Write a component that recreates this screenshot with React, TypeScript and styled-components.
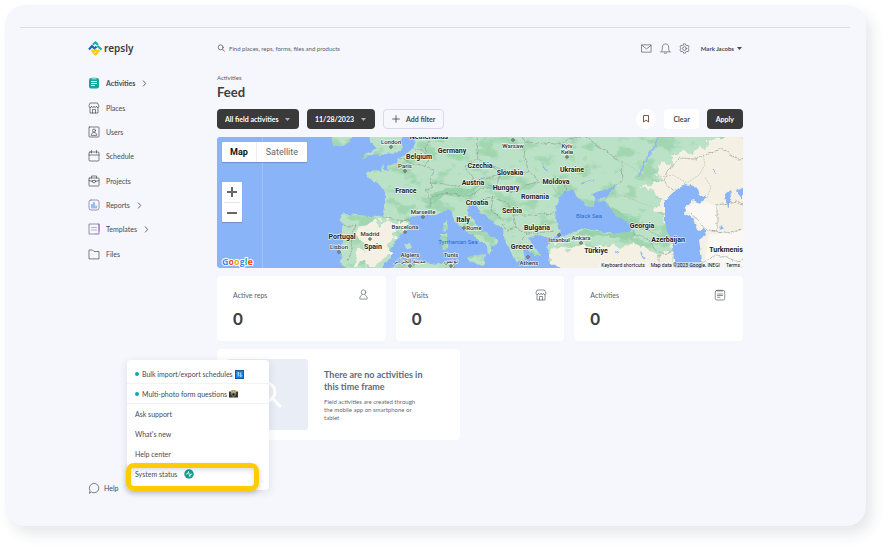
import React from "react";
import styled, { createGlobalStyle, css } from "styled-components";

const GlobalStyle = createGlobalStyle`
  *, *::before, *::after { box-sizing: border-box; }
  body { margin: 0; background: #fff; font-family: Lato, "Open Sans", sans-serif; color: #454a52; }
  button, input, select { font: inherit; color: inherit; margin: 0; padding: 0; border: 0; background: none; }
  button { cursor: pointer; }
  a { color: inherit; text-decoration: none; }
  h1, h2, p, ul { margin: 0; padding: 0; }
  ul { list-style: none; }
`;

const Page = styled.div`
  min-height: 100vh;
  padding: 5px 25px 25px 5px;
  display: flex;
`;

const Shell = styled.div`
  flex: 1;
  display: flex;
  flex-direction: column;
  padding: 22px 16px 28px 15px;
  border-radius: 20px;
  background: #f5f7fc;
  box-shadow: 6px 8px 14px rgba(40, 44, 66, 0.11);
`;

const Body = styled.div`
  flex: 1;
  display: grid;
  grid-template-columns: 129px 1fr;
  margin: 0 107px 0 68px;
`;

const Rule = styled.hr`
  width: 100%;
  height: 1px;
  margin: 0;
  border: 0;
  background: #dcdee4;
`;

const Sidebar = styled.aside`
  display: flex;
  flex-direction: column;
  padding-top: 13px;
`;

const Logo = styled.a`
  display: flex;
  align-items: center;
  gap: 1px;
  height: 15px;
  color: #3c3c3c;
  font: 600 10px/15px "Noto Sans", sans-serif;
`;

const NavList = styled.ul`
  display: grid;
  height: 195px;
  margin-top: 15px;
`;

const NavItem = styled.li`
  display: flex;
  align-items: center;
`;

const NavLink = styled.a<{ $active?: boolean }>`
  display: flex;
  align-items: center;
  gap: 6px;
  font-size: 7px;
  font-weight: ${(p) => (p.$active ? 700 : 400)};
  color: #454a52;
`;

const HelpArea = styled.div`
  position: relative;
  margin-top: auto;
`;

const HelpButton = styled.button`
  display: flex;
  align-items: center;
  gap: 4px;
  height: 20px;
  font-size: 7px;
`;

const HelpMenu = styled.ul`
  position: absolute;
  z-index: 2;
  left: 39px;
  bottom: 8px;
  width: 142px;
  height: 130px;
  padding-top: 4px;
  border-radius: 4px;
  background: #fff;
  box-shadow: 0 2px 8px rgba(40, 50, 80, 0.12);
`;

const HelpItem = styled.li<{ $divided?: boolean }>`
  height: 20px;
  border-bottom: 1px solid ${(p) => (p.$divided ? "#f2f3f6" : "transparent")};
`;

const HelpLink = styled.a`
  display: flex;
  align-items: center;
  gap: 2px;
  height: 20px;
  padding: 0 8px;
  font-size: 7px;
  white-space: nowrap;
`;

const Dot = styled.span`
  width: 4px;
  height: 4px;
  margin-right: 1px;
  border-radius: 50%;
  background: #12a89d;
`;

const Highlight = styled.li`
  position: absolute;
  left: -1px;
  right: 10px;
  bottom: -1px;
  height: 28px;
  border: 5px solid #ffcb05;
  border-radius: 8px;
  box-shadow: 0 2px 5px rgba(30, 40, 60, 0.25), inset 0 2px 5px rgba(30, 40, 60, 0.16);
  pointer-events: none;
`;

const Main = styled.main`
  min-width: 0;
  display: flex;
  flex-direction: column;
`;

const TopBar = styled.header`
  display: flex;
  align-items: center;
  gap: 8px;
  height: 40px;
`;

const Search = styled.label`
  flex: 1;
  display: flex;
  align-items: center;
  gap: 4px;
  color: #59606b;
  font-size: 6px;
`;

const SearchInput = styled.input`
  flex: 1;
  min-width: 0;
  height: 16px;
  outline: 0;
  &::placeholder { color: #59606b; opacity: 1; }
`;

const IconButton = styled.button`
  display: flex;
  color: #4a515b;
`;

const UserButton = styled.button`
  display: flex;
  align-items: center;
  gap: 3px;
  margin: 0 1px 0 3px;
  font-size: 6px;
  font-weight: 700;
`;

const Crumb = styled.p`
  margin-top: 6px;
  font-size: 6px;
  line-height: 8px;
  color: #59606b;
`;

const Title = styled.h1`
  margin-top: 2px;
  font-size: 13px;
  line-height: 16px;
  font-weight: 700;
  color: #3c3e42;
`;

const FilterBar = styled.div`
  display: flex;
  align-items: center;
  gap: 8px;
  height: 20px;
  margin-top: 9px;
`;

const Spacer = styled.span`
  flex: 1;
`;

const boxed = css`
  height: 20px;
  border-radius: 4px;
  font-size: 7px;
  font-weight: 700;
`;

const SelectBox = styled.label`
  display: grid;
  align-items: center;
  color: #fff;
  & > * { grid-area: 1 / 1; }
  & > svg { justify-self: end; margin-right: 9px; pointer-events: none; }
`;

const Select = styled.select`
  ${boxed}
  appearance: none;
  padding: 0 20px 0 8px;
  background: #3a3a3a;
`;

const Button = styled.button<{ $kind: "dark" | "light" | "outline" }>`
  ${boxed}
  display: flex;
  align-items: center;
  gap: 6px;
  padding: 0 9px;
  ${(p) => p.$kind === "dark" && css`background: #3a3a3a; color: #fff;`}
  ${(p) => p.$kind === "light" && css`background: #fff;`}
  ${(p) => p.$kind === "outline" && css`padding: 0 8px; border: 1px solid #d8dbee;`}
`;

const RoundButton = styled.button`
  display: flex;
  align-items: center;
  justify-content: center;
  width: 20px;
  height: 20px;
  border-radius: 50%;
  background: #fff;
`;

const MapPanel = styled.section`
  display: grid;
  height: 131px;
  margin-top: 8px;
  border-radius: 4px;
  overflow: hidden;
  position: relative;
  background: #8ab4f8;
`;

const MapArt = styled.svg`
  width: 100%;
  height: 131px;
`;

const MapTypes = styled.div`
  position: absolute;
  left: 5px;
  top: 5px;
  display: flex;
  background: #fff;
  border-radius: 1px;
  box-shadow: 0 1px 1px rgba(0, 0, 0, 0.2);
`;

const MapType = styled.button<{ $on?: boolean }>`
  height: 20px;
  padding: 0 8px;
  font: ${(p) => (p.$on ? 700 : 400)} 9px Roboto, sans-serif;
  color: ${(p) => (p.$on ? "#111" : "#666")};
  & + & { padding: 0 9px; border-left: 1px solid #eee; }
`;

const ZoomBox = styled.div`
  position: absolute;
  left: 5px;
  top: 45px;
  width: 20px;
  background: #fff;
  border-radius: 1px;
  box-shadow: 0 1px 1px rgba(0, 0, 0, 0.2);
`;

const ZoomButton = styled.button`
  display: flex;
  align-items: center;
  justify-content: center;
  width: 16px;
  height: 20px;
  margin: 0 2px;
  & + & { border-top: 1px solid #e6e6e6; }
`;

const GoogleMark = styled.span`
  position: absolute;
  left: 5px;
  bottom: 1px;
  font: 700 9px/11px "Open Sans", sans-serif;
  -webkit-text-stroke: 2px #fff;
  paint-order: stroke fill;
`;

const Tint = styled.span<{ $c: string }>`
  color: ${(p) => p.$c};
`;

const Credits = styled.div`
  position: absolute;
  right: 0;
  bottom: 0;
  display: flex;
  gap: 6px;
  padding: 0 3px;
  background: rgba(245, 245, 245, 0.6);
  font: 5px/6px Roboto, sans-serif;
  color: #111;
`;

const Stats = styled.div`
  display: grid;
  grid-template-columns: repeat(3, 1fr);
  gap: 10px;
  margin-top: 8px;
`;

const StatCard = styled.section`
  height: 65px;
  padding: 13px 17px 0 16px;
  border-radius: 4px;
  background: #fff;
`;

const StatHead = styled.div`
  display: flex;
  align-items: center;
  justify-content: space-between;
  height: 11px;
  font-size: 7px;
  color: #59606b;
`;

const StatValue = styled.p`
  margin-top: 9px;
  font-size: 17px;
  line-height: 20px;
  font-weight: 700;
  color: #3c3e42;
`;

const EmptyCard = styled.section`
  display: flex;
  gap: 16px;
  width: 243px;
  height: 91px;
  margin-top: 8px;
  padding: 10px;
  border-radius: 4px;
  background: #fff;
`;

const EmptyArt = styled.div`
  flex: 0 0 81px;
  display: flex;
  align-items: center;
  justify-content: center;
  border-radius: 3px;
  background: #e9edf5;
`;

const EmptyText = styled.div`
  width: 108px;
  padding-top: 10px;
  color: #5f6a78;
`;

const EmptyTitle = styled.h2`
  font-size: 9px;
  line-height: 12px;
  font-weight: 700;
  white-space: nowrap;
`;

const EmptyCopy = styled.p`
  margin-top: 5px;
  font-size: 6px;
  line-height: 8px;
  white-space: nowrap;
`;

type IconProps = { size?: number; children: React.ReactNode };
const Icon = ({ size = 12, children }: IconProps) => (
  <svg width={size} height={size} viewBox="0 0 24 24" fill="none" stroke="currentColor" strokeWidth="1.400" strokeLinecap="round" strokeLinejoin="round" aria-hidden="true">
    {children}
  </svg>
);

const Store = () => (
  <Icon>
    <path d="M5 2h14l3 6c0 2-1.200 3-2.500 3S17 10 17 8.500C17 10 16 11 14.500 11S12 10 12 8.500C12 10 11 11 9.500 11S7 10 7 8.500C7 10 6 11 4.500 11S2 10 2 8z" />
    <path d="M4 11v11h16V11M9 22v-7h6v7" />
  </Icon>
);
const Person = () => (
  <Icon size={11}><circle cx="12" cy="7" r="5" /><path d="M9 12 4 18v4h16v-4l-5-6" /></Icon>
);
const Note = () => (
  <Icon><rect x="2.500" y="3" width="19" height="19" rx="3" /><path d="M8 2v3M12 2v3M16 2v3M7 10h10M7 13h10M7 16.500h5" /></Icon>
);
const Chevron = () => <Icon size={7}><path d="m8 3 8 9-8 9" strokeWidth="2.800" /></Icon>;
const Caret = ({ color = "currentColor" }: { color?: string }) => (
  <svg width="5" height="3" viewBox="0 0 10 6" aria-hidden="true"><path d="M0 0h10L5 6z" fill={color} /></svg>
);

const navItems = [
  { label: "Activities", active: true, more: true, icon: (
    <Icon><g stroke="none"><rect x="2" y="2" width="20" height="21" rx="4" fill="#12a89d" /><path d="M7 1h10v4H7z" fill="#7fd3cc" /></g><path d="M7 9h10M7 13h10M7 17h6" stroke="#fff" strokeWidth="2" /></Icon>) },
  { label: "Places", icon: <Store /> },
  { label: "Users", icon: <Icon><rect x="2" y="2" width="20" height="20" rx="1" /><circle cx="12" cy="9" r="3" /><path d="M6.500 18c0-3 2-5 5.500-5s5.500 2 5.500 5z" /></Icon> },
  { label: "Schedule", icon: <Icon><rect x="2" y="4" width="20" height="18" rx="2" /><path d="M2 10h20M7 1v5M17 1v5" /></Icon> },
  { label: "Projects", icon: <Icon><rect x="2" y="6" width="20" height="16" rx="1" /><path d="M7 6V2h10v4M2 11l7 2M22 11l-7 2M9 11h6v3l-3 2-3-2z" /></Icon> },
  { label: "Reports", more: true, icon: <Icon><rect x="2" y="2" width="20" height="20" rx="4" stroke="#7a6b9c" /><path d="M8 11v7M12 7v11M16 14v4" stroke="#3984d8" strokeWidth="2" /></Icon> },
  { label: "Templates", more: true, icon: <Icon><path d="M22 16V2H2v20h14" stroke="#6f6488" /><path d="M22 2v20h-6" stroke="#8c3bb5" /><path d="M7 9h10M7 14h10" stroke="#9b93aa" /></Icon> },
  { label: "Files", icon: <Icon><path d="M2 21V4h7l3 3h10v14z" /></Icon> },
];

const stats = [
  { label: "Active reps", value: 0, icon: <Person /> },
  { label: "Visits", value: 0, icon: <Store /> },
  { label: "Activities", value: 0, icon: <Note /> },
];

type Label = [string, number, number];
const countries: Label[] = [
  ["Netherlands", 212, 2], ["Belgium", 202, 22], ["Germany", 235, 16], ["Czechia", 263, 31],
  ["Slovakia", 293, 38], ["Austria", 256, 48], ["Hungary", 289, 53], ["France", 189, 56],
  ["Romania", 318, 62], ["Croatia", 260, 68], ["Serbia", 295, 76], ["Italy", 246, 85],
  ["Bulgaria", 320, 93], ["Greece", 305, 112], ["Portugal", 125, 102], ["Spain", 156, 112],
  ["Ukraine", 355, 35], ["Moldova", 339, 47], ["Georgia", 425, 91], ["Azerbaijan", 451, 105],
  ["Türkiye", 379, 116], ["Turkmenis", 509, 115],
];
const cities: Label[] = [
  ["London", 174, 7], ["Paris", 188, 31], ["Warsaw", 296, 11], ["Kyiv", 350, 11], ["Київ", 350, 17],
  ["Marseille", 206, 77], ["Barcelona", 188, 92], ["Madrid", 153, 99], ["Lisbon", 122, 112],
  ["Rome", 257, 93], ["Algiers", 193, 120], ["مدينة الجزائر", 193, 126], ["Tunis", 234, 120],
  ["تونس", 234, 126], ["Athens", 312, 128], ["İstanbul", 342, 105], ["Ankara", 364, 103],
];
const pins = [[174, 10], [188, 34], [296, 3], [350, 20], [206, 80], [188, 95], [153, 102], [122, 115], [247, 91], [193, 129], [234, 129], [311, 120], [342, 98], [364, 106]];

const landShapes = [
  "M114-5 116 3 118 10 125 9 133 5 139-5z",
  "M152-5 153 5 160 11 153 15 144 22 151 20 158 17 165 19 173 16 183 15 186 9 183 5 190-5z",
  "M203-5 196 11 188 18 182 21 180 26 171 28 172 34 168 33 165 26 164 34 158 33 148 36 150 41 160 45 168 55 168 70 166 79 160 80 140 78 127 77 122 83 126 88 126 100 123 113 126 117 124 126 132 135 165 135 168 125 174 121 173 110 186 96 194 90 192 83 196 79 218 78 225 75 231 72 235 76 237 83 246 93 254 96 263 103 270 110 271 118 276 114 273 108 281 107 278 101 264 94 258 85 250 75 251 65 258 65 264 76 276 85 286 91 288 106 295 115 299 125 308 121 306 113 317 108 311 101 320 98 333 101 341 98 343 94 338 83 341 65 346 54 356 53 362 61 370 69 378 68 377 63 388 64 397 74 413 86 415 93 405 97 390 96 366 91 353 97 345 99 336 104 330 109 333 126 343 127 352 135 535 135 535-5z",
  "M170 135 176 129 196 126 215 127 230 125 240 126 237 130 242 135z",
  "M250 120 269 118 266 129 252 124z",
  "M223 96 230 96 231 110 225 113z",
  "M226 87 230 84 231 93 227 95z",
  "M187 108 193 106 196 111 191 112z",
  "M312 106 324 118 318 120 309 110z",
];
const dry = [
  "M535-5H510L494 8 478 15 464 11 450 24 444 26 442 40 436 44 424 50 431 54 443 60 440 72 447 80 452 92 460 131H535z",
  "M141 90 156 86 170 92 175 87 193 84 182 96 173 108 168 124 146 130 136 129 140 116 148 108 142 100z",
  "M332 110 346 112 362 108 394 110 420 107 440 118 455 112 460 135H350L336 124z",
  "M163 80 175 82 187 90 172 99 163 91z",
];
const seas = [
  "M458 53 468 48 480 51 482 58 490 61 483 66 476 63 468 70 466 76 476 81 480 93 487 92 490 97 482 103 485 123 483 135H458L456 110 450 95 447 80 447 65z",
  "M374 57 400 49 393 55 390 61 378 63z",
  "M508 57 513 53 515 60 510 71zM519 54 526 50V63zM502 91 505 88 507 92z",
];
const borders = [
  "M126 88 138 90 134 98 135 113 131 124",
  "M166 79 175 82 186 84 193 82",
  "M183 21 194 26 207 29 217 33 212 46 216 50 208 54 214 62 212 70 217 78",
  "M196 11 210 16 212 26 207 30M214 0 209 10 211 17",
  "M212 46 228 47 240 50 250 45 258 43 248 29 262 22 276 30 284 38 272 41 258 44",
  "M262 22 259 0M276 30 300 36 312 35 307 21 308 5 302-5",
  "M284 38 278 50 264 52 252 60 235 57 225 56 215 61",
  "M272 48 282 53 300 55 312 47 322 45 315 37 312 35",
  "M322 45 333 46 344 58M333 43 341 40 350 52 346 56",
  "M264 62 276 60 290 66 296 78 312 78 338 76M264 62 255 67M276 60 273 71 286 84",
  "M296 78 299 90 310 97 337 94M299 90 290 94 286 88M310 97 304 103 298 112",
  "M308 5 340 7 366-2 385 12 404 24 405 43 396 50",
  "M413 86 431 93 440 99 452 104M415 96 432 103 438 113 447 117 458 113",
  "M535 21 520 22 505 12 488 17 476 22 464 21 450 34 447 44 456 54",
  "M474 76 490 94H500V68L520 64 535 72M492 93 514 96 524 92M485 126 500 118 520 124 535 118",
  "M442 118 442 131M196 126 199 135M238 130 233 135",
];
const labelFont = 'Roboto, "DejaVu Sans", sans-serif';

const EuropeMap = () => (
  <MapArt viewBox="0 0 526 131" preserveAspectRatio="xMidYMid slice" role="img" aria-label="Map of Europe">
    <defs>
      <filter id="coast" filterUnits="userSpaceOnUse" x="-10" y="-10" width="546" height="151">
        <feTurbulence type="fractalNoise" baseFrequency="0.14" numOctaves="3" seed="7" />
        <feDisplacementMap in="SourceGraphic" scale="5" xChannelSelector="R" yChannelSelector="G" />
      </filter>
      <filter id="woods" filterUnits="userSpaceOnUse" x="-10" y="-10" width="546" height="151" colorInterpolationFilters="sRGB">
        <feTurbulence type="fractalNoise" baseFrequency="0.05 0.08" numOctaves="4" seed="12" />
        <feColorMatrix values="0 0 0 0 .63  0 0 0 0 .84  0 0 0 0 .69  7 0 0 0 -3.700" />
        <feComposite in2="SourceGraphic" operator="in" />
      </filter>
      <filter id="steppe" filterUnits="userSpaceOnUse" x="-10" y="-10" width="546" height="151">
        <feTurbulence type="fractalNoise" baseFrequency="0.1" numOctaves="3" seed="3" result="n" />
        <feDisplacementMap in="SourceGraphic" in2="n" scale="18" xChannelSelector="R" yChannelSelector="G" />
      </filter>
    </defs>
    <rect width="526" height="131" fill="#8ab4f8" />
    <path d="M45.500 0v131" stroke="#9fc2fa" />
    <g fill="#bbe2c6" filter="url(#coast)">{landShapes.map((d) => <path key={d} d={d} />)}</g>
    <g filter="url(#woods)"><g filter="url(#coast)">{landShapes.map((d) => <path key={d} d={d} />)}</g></g>
    <path d="M214 57 228 51 250 52 262 48 258 56 240 60 228 58 216 67zM390 67 410 80 440 92 425 90 400 80zM366 92 390 97 418 94 416 103 390 99 360 98z" fill="#98d2aa" filter="url(#coast)" />
    <g fill="#f5f0e4" filter="url(#steppe)">{dry.map((d) => <path key={d} d={d} />)}</g>
    <path d="M468 72 478 66 490 65 500 70V94L483 92 478 80zM492 98 535 92V135H486z" fill="#fbf8f3" />
    <g fill="#8ab4f8" filter="url(#coast)">{seas.map((d) => <path key={d} d={d} />)}</g>
    <path d="M441 0 436 12 427 25 422 40M365 47 372 44 377 44M324 26 330 35M398 116 402 114M425 115 428 122M495 32 499 38" fill="none" stroke="#8ab4f8" strokeWidth="1.200" filter="url(#coast)" />
    <g fill="none" stroke="#8b9b93" strokeWidth=".7" strokeDasharray="3 .7" filter="url(#coast)">{borders.map((d) => <path key={d} d={d} />)}</g>
    <g fill="none" stroke="#b5b8ae" strokeWidth=".6" strokeDasharray="2 1">
      <path d="M443 40 456 38 470 46 482 38 488 28 486 17M490 61 494 50 488 40M395 56 410 60 424 66 436 70M404 24 418 32 430 42" />
    </g>
    <g fill="#fff" stroke="#333" strokeWidth=".9">{pins.map(([x, y]) => <circle key={`${x}-${y}`} cx={x} cy={y} r="1.200" />)}</g>
    <g textAnchor="middle" fontFamily={labelFont} stroke="#fff" strokeWidth="1.400" strokeOpacity=".75" strokeLinejoin="round" paintOrder="stroke">
      <g fontSize="7" fontWeight="700" fill="#222">{countries.map(([t, x, y]) => <text key={t} x={x} y={y}>{t}</text>)}</g>
      <g fontSize="6" fontWeight="500" fill="#333">{cities.map(([t, x, y]) => <text key={t} x={x} y={y}>{t}</text>)}</g>
    </g>
    <g textAnchor="middle" fontFamily={labelFont} fontSize="6" fill="#2d6bd2">
      <text x="241" y="107">Tyrrhenian Sea</text>
      <text x="372" y="81">Black Sea</text>
    </g>
  </MapArt>
);

const RepslyMark = () => (
  <svg width="15" height="15" viewBox="0 0 30 30" fill="none" strokeWidth="4.200" aria-hidden="true">
    <path d="m2 17 6-7 5 5 4-4" stroke="#1a62b5" />
    <path d="m10 7 5-4 5 5" stroke="#12b0a5" />
    <path d="m19 10 8 7" stroke="#12b0a5" />
    <path d="m7 18 4 4 4-4 4 4 4-4M10 22l5 5 5-5" stroke="#ffcb05" />
  </svg>
);

const gearPath = "M10 2h4l1 3 2 1 3-1 2 4-2 2v2l2 2-2 4-3-1-2 1-1 3h-4l-1-3-2-1-3 1-2-4 2-2v-2L2 9l2-4 3 1 2-1z";

export default function App() {
  return (
    <>
      <GlobalStyle />
      <Page>
        <Shell>
          <Rule />
          <Body>
            <Sidebar>
              <Logo href="#home"><RepslyMark />repsly</Logo>
              <nav aria-label="Main">
                <NavList>
                  {navItems.map((item) => (
                    <NavItem key={item.label}>
                      <NavLink href={`#${item.label.toLowerCase()}`} $active={item.active}>
                        {item.icon}{item.label}{item.more && <Chevron />}
                      </NavLink>
                    </NavItem>
                  ))}
                </NavList>
              </nav>
              <HelpArea>
                <HelpButton type="button" aria-expanded="true">
                  <Icon><path d="M3 22l1-5a9.500 9.500 0 1 1 3.500 3.500z" /></Icon>Help
                </HelpButton>
                <HelpMenu>
                  <HelpItem $divided>
                    <HelpLink href="#bulk"><Dot />Bulk import/export schedules
                      <svg width="9" height="9" viewBox="0 0 18 18" aria-hidden="true"><path d="M0 0h18v18H0z" fill="#0b5cad" /><path d="M2 2h14v14H2z" fill="#1583e0" /><path d="M6.500 13V5M4.500 7l2-2 2 2M11.500 5v8M9.500 11l2 2 2-2" fill="none" stroke="#fff" strokeWidth="1.500" /></svg>
                    </HelpLink>
                  </HelpItem>
                  <HelpItem $divided>
                    <HelpLink href="#photo"><Dot />Multi-photo form questions
                      <svg width="9" height="8" viewBox="0 0 18 16" aria-hidden="true"><path d="M0 3h4l1-2h8l1 2h4v12H0z" fill="#333" /><path d="m9 0 2 3 4-2-2 4 3 2H2l3-2-2-4 4 2z" fill="#e8c933" /><circle cx="9" cy="9" r="4" fill="#555" stroke="#999" /><circle cx="9" cy="9" r="1.500" fill="#111" /></svg>
                    </HelpLink>
                  </HelpItem>
                  {["Ask support", "What's new", "Help center"].map((t) => (
                    <HelpItem key={t}><HelpLink href="#help">{t}</HelpLink></HelpItem>
                  ))}
                  <HelpItem>
                    <HelpLink href="#status">System status
                      <svg width="15" height="10" viewBox="-10 0 30 20" aria-hidden="true"><circle cx="10" cy="10" r="9.500" fill="#12a191" /><path d="M4 10h3l2-5 2.500 10 2-5H16" fill="none" stroke="#fff" strokeWidth="1.600" /></svg>
                    </HelpLink>
                  </HelpItem>
                  <Highlight aria-hidden="true" />
                </HelpMenu>
              </HelpArea>
            </Sidebar>

            <Main>
              <TopBar>
                <Search>
                  <Icon size={8}><circle cx="11" cy="10" r="7.500" strokeWidth="2.400" /><path d="m17 16 5 6" strokeWidth="2.400" /></Icon>
                  <SearchInput type="search" aria-label="Search" placeholder="Find places, reps, forms, files and products" />
                </Search>
                <IconButton type="button" aria-label="Messages"><Icon size={11}><rect x="2" y="4" width="20" height="16" /><path d="m2 5 10 8 10-8" /></Icon></IconButton>
                <IconButton type="button" aria-label="Notifications"><Icon size={11}><path d="M2 19c2-1 3-3 3-6V9c0-4 3-7 7-7s7 3 7 7v4c0 3 1 5 3 6zM9 21.500c1 1.500 5 1.500 6 0" /></Icon></IconButton>
                <IconButton type="button" aria-label="Settings"><Icon size={11}><path d={gearPath} /><circle cx="12" cy="12" r="4" /></Icon></IconButton>
                <UserButton type="button" aria-haspopup="menu">Mark Jacobs <Caret /></UserButton>
              </TopBar>

              <Crumb>Activities</Crumb>
              <Title>Feed</Title>

              <FilterBar>
                <SelectBox><Select aria-label="Activity type"><option>All field activities</option></Select><Caret color="#a9adb5" /></SelectBox>
                <SelectBox><Select aria-label="Date"><option>11/28/2023</option></Select><Caret color="#a9adb5" /></SelectBox>
                <Button type="button" $kind="outline"><Icon size={8}><path d="M12 2v20M2 12h20" strokeWidth="2.600" /></Icon>Add filter</Button>
                <Spacer />
                <RoundButton type="button" aria-label="Bookmark"><svg width="6" height="8" viewBox="0 0 12 16" fill="none" stroke="#6b4440" strokeWidth="1.800" aria-hidden="true"><path d="M1 1h10v13l-5-4-5 4z" /></svg></RoundButton>
                <Button type="button" $kind="light">Clear</Button>
                <Button type="button" $kind="dark">Apply</Button>
              </FilterBar>

              <MapPanel>
                <EuropeMap />
                <MapTypes><MapType type="button" $on>Map</MapType><MapType type="button">Satellite</MapType></MapTypes>
                <ZoomBox>
                  <ZoomButton type="button" aria-label="Zoom in"><svg width="10" height="10" viewBox="0 0 10 10"><path d="M5 0v10M0 5h10" stroke="#666" strokeWidth="2" /></svg></ZoomButton>
                  <ZoomButton type="button" aria-label="Zoom out"><svg width="10" height="10" viewBox="0 0 10 10"><path d="M0 5h10" stroke="#666" strokeWidth="2" /></svg></ZoomButton>
                </ZoomBox>
                <GoogleMark><Tint $c="#4285f4">G</Tint><Tint $c="#ea4335">o</Tint><Tint $c="#e8a900">o</Tint><Tint $c="#4285f4">g</Tint><Tint $c="#34a853">l</Tint><Tint $c="#ea4335">e</Tint></GoogleMark>
                <Credits><span>Keyboard shortcuts</span><span>Map data ©2023 Google, INEGI</span><a href="#terms">Terms</a></Credits>
              </MapPanel>

              <Stats>
                {stats.map((s) => (
                  <StatCard key={s.label}>
                    <StatHead>{s.label}{s.icon}</StatHead>
                    <StatValue>{s.value}</StatValue>
                  </StatCard>
                ))}
              </Stats>

              <EmptyCard>
                <EmptyArt><svg width="30" height="30" viewBox="0 0 30 30" fill="none" stroke="#fff" strokeWidth="3" strokeLinecap="round" aria-hidden="true"><circle cx="13" cy="12" r="9" /><path d="m19 18 8 8" /></svg></EmptyArt>
                <EmptyText>
                  <EmptyTitle>There are no activities in<br />this time frame</EmptyTitle>
                  <EmptyCopy>Field activities are created through<br />the mobile app on smartphone or<br />tablet</EmptyCopy>
                </EmptyText>
              </EmptyCard>
            </Main>
          </Body>
        </Shell>
      </Page>
    </>
  );
}
